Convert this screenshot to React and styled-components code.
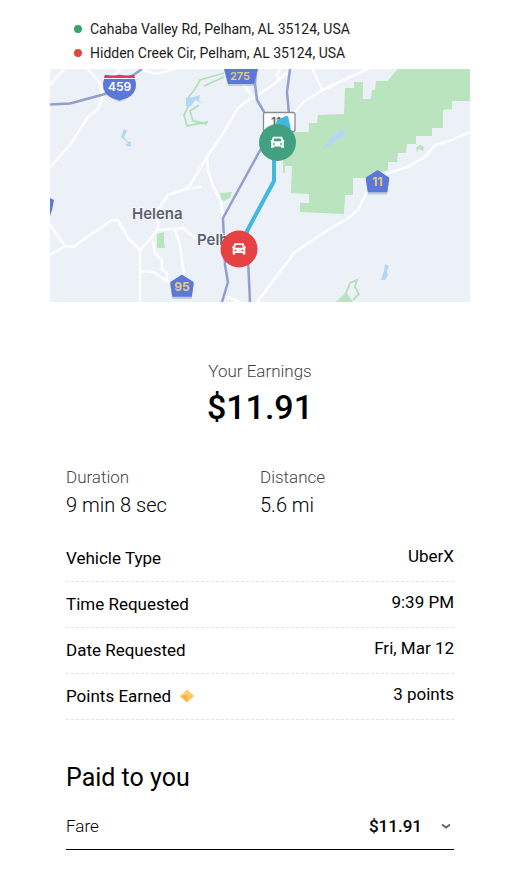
import React, { useState } from "react";
import styled, { createGlobalStyle } from "styled-components";

const GlobalStyle = createGlobalStyle`
  *, *::before, *::after { box-sizing: border-box; }
  body {
    margin: 0;
    background: #fff;
    color: #000;
    font-family: Roboto, "Liberation Sans", sans-serif;
    font-size: 17px;
    line-height: 24px;
  }
`;

const Page = styled.main`
  padding: 17px 47px 22px 50px;
`;

const Stops = styled.ul`
  list-style: none;
  margin: 0;
  padding: 0 24px 4px;
`;

const Stop = styled.li`
  display: flex;
  align-items: center;
  gap: 8px;
  font-size: 14px;
  font-weight: 400;
  color: #1c1c1c;
  &::before {
    content: "";
    width: 8px;
    height: 8px;
    border-radius: 50%;
    background: ${(p) => p.$color};
  }
`;

const Map = styled.svg`
  display: block;
  width: 100%;
  height: auto;
  background: #ecf0f7;
  font-family: Inter, "Liberation Sans", sans-serif;
`;

const Earnings = styled.section`
  padding-top: 55px;
  text-align: center;
`;

const Caption = styled.h2`
  margin: 0;
  font-size: 17px;
  font-weight: 300;
  line-height: 28px;
  color: #444;
`;

const Total = styled.p`
  margin: 0;
  font-size: 34px;
  font-weight: 500;
  line-height: 44px;
`;

const Details = styled.section`
  padding: 0 16px;
`;

const Stats = styled.dl`
  display: grid;
  grid-template-columns: 1fr 1fr;
  margin: 0;
  padding: 34px 0 16px;
`;

const StatName = styled.dt`
  font-weight: 300;
  line-height: 28px;
  color: #444;
`;

const StatValue = styled.dd`
  margin: 0;
  font-size: 20px;
  font-weight: 300;
  line-height: 29px;
`;

const Facts = styled.dl`
  margin: 0;
`;

const Fact = styled.div`
  display: flex;
  justify-content: space-between;
  height: 46px;
  border-bottom: 1px dashed #e2e2e2;
`;

const FactName = styled.dt`
  display: flex;
  align-items: center;
  gap: 8px;
  padding-bottom: 2px;
`;

const FactValue = styled.dd`
  margin: 0;
  padding-top: 8px;
`;

const Heading = styled.h2`
  margin: 0;
  padding: 40px 0 18px;
  font-size: 25px;
  font-weight: 400;
  line-height: 36px;
`;

const FareButton = styled.button`
  display: flex;
  align-items: center;
  width: 100%;
  padding: 0 0 11px;
  border: 0;
  border-bottom: 1px solid #000;
  background: none;
  color: #000;
  font: inherit;
  text-align: left;
  cursor: pointer;
`;

const FareName = styled.span`
  flex: 1;
  font-weight: 300;
`;

const FareAmount = styled.span`
  padding-right: 16px;
  font-weight: 500;
`;

const Icon = styled.svg`
  display: block;
  flex: none;
`;

const facts = [
  ["Vehicle Type", "UberX"],
  ["Time Requested", "9:39 PM"],
  ["Date Requested", "Fri, Mar 12"],
  ["Points Earned", "3 points"],
];

function Diamond() {
  return (
    <Icon width="16" height="16" viewBox="0 0 16 16" aria-hidden="true">
      <path d="M8 1.5 15 8H1Z" fill="#fbd283" />
      <path d="M8 1.5 15 8 8 9.5Z" fill="#fccb72" />
      <path d="M1 8 8 6.5V14.5Z" fill="#f2b33f" />
      <path d="M8 6.5 15 8 8 14.5Z" fill="#fbc45d" />
    </Icon>
  );
}

function Car({ x, y, color }) {
  return (
    <g transform={`translate(${x} ${y})`}>
      <circle r="18.5" fill={color} />
      <path
        fill="#fff"
        fillRule="evenodd"
        d="M-4.1-5.7H4.1Q4.7-5.7 4.9-5L5.6-2.4H6.8V-.9H6.3V5.6H3.8V4H-3.8V5.6H-6.3V-.9H-6.8V-2.4H-5.6L-4.9-5Q-4.7-5.7-4.1-5.7ZM-3.2-4-3.9-1.2H3.9L3.2-4ZM-4.6.8V2.2H-2.6V.8ZM2.6.8V2.2H4.6V.8Z"
      />
    </g>
  );
}

function Pentagon({ x, y, label }) {
  return (
    <g transform={`translate(${x} ${y})`}>
      <path d="M0-9.5 11-2.5Q12-2 11.7-.8L9.5 13H-9.5L-11.7-.8Q-12-2-11-2.5Z" fill="#9ba6c5" opacity=".5" />
      <path d="M0-11.5 11.3-4.3Q12-3.5 11.7-2.5L9.8 10.8H-9.8L-11.7-2.5Q-12-3.5-11.3-4.3Z" fill="#5b78d8" />
      <text y="4.5" textAnchor="middle" fontSize="12" fontWeight="700" fill="#e2cb7c">{label}</text>
    </g>
  );
}

function RouteMap() {
  return (
    <Map viewBox="0 0 420 233" role="img" aria-label="Trip route through Pelham and Helena">
      <g fill="#b9e4be">
        <path d="M420 0V32H402V40L393 41V59H382V67H366V75H357L356 84H348L347 93H338V101L316 109H303V126H295L294 145 250 143V134H259V125L241 124 242 97H235V104L233 103V91L228 63H259V54H267L268 46 294 45 295 19H304V13H313V30H321L322 21H325L326 12H338L345 3 348 0Z" />
        <path d="M107 165 114 163V172L115 179H107ZM170 123 173 124 182 123 180 129 174 132 171 130ZM366 79 370 76 374 78 373 82 369 80 367 83ZM286 233 296 223 303 233Z" />
      </g>
      <g fill="none" stroke="#b3e0ba" strokeWidth="1.8">
        <path d="M174 4 160 8 150 11 145 20 138 29 139 36 134 46 137 57 158 53M174 8 154 17M149 36 140 42 143 52 157 55M296 224 300 214 307 211 305 218 309 225 303 231" />
      </g>
      <g fill="#b3d7f7">
        <path d="M271 81 281 69 292 60 297 68 290 68 281 76ZM136 29 144 28 150 26 149 31 153 34 145 31 141 37 136 37ZM335 195 339 197 337 202 338 206 335 211 331 211 334 202ZM74 60 77 62 74 68 78 73 81 72 81 78 75 76 78 74 71 68Z" />
      </g>
      <g fill="none" stroke="#fcfdff" strokeWidth="2.6" strokeLinejoin="round" strokeLinecap="round">
        <path d="M38 0 50 14 53 27 48 40 38 48 20 76 0 98M14 0 0 16M70 0 57 15M90 0 106 5 125 0M190 11 203 28 188 39 177 58 157 88 140 116 133 121M157 88 158 101 163 117 171 133 173 148" />
        <path d="M206 27 223 16 240 1M230 0 227 6 230 11M243 46 253 33 273 21 300 8 318 0M263 1 272 20" />
        <path d="M420 63 402 71 385 76 375 88 357 98 339 104 320 116 308 141 300 148 275 163 245 183 207 233" />
        <path d="M150 118 133 121 118 126 108 141V161L90 181V233M90 181 78 169 68 151 62 151 40 166 23 178 15 177 0 186M15 177 0 156M108 161 133 159 145 169M125 161 130 176 134 206M103 173 105 184 112 191V201L117 204V211M90 202 103 203 120 214M178 228 190 233" />
      </g>
      <g fill="none" stroke="#929ecf" strokeWidth="2.5" strokeLinejoin="round">
        <path d="M0 35.5 20 34.5 55 25 82 7 92 0M206 0 205 15 207 31 217 48M240 0 237 23 239 45M219 65 173 149 175 196 178 213 172 233M198 190 200 233" />
      </g>
      <path d="M53 12H86V19Q82 29 69.5 33 57 29 53 19Z" fill="#b8c0d8" opacity=".7" />
      <path d="M55 6Q62 8 69.5 6 77 8 84 6L86 15Q86 25 77 29L69.5 31.5 62 29Q53 25 53 15Z" fill="#5b78d8" />
      <path d="M55 5.8Q62 7 69.5 5.8 77 7 84 5.8L85 9H54Z" fill="#dc3979" />
      <path d="M53 9.5H86" stroke="#fff" strokeWidth="1.2" />
      <text x="69.5" y="22" textAnchor="middle" fontSize="12" fontWeight="600" fill="#fff">459</text>
      <path d="M174 0H208L204 17H178Z" fill="#9ba6c5" opacity=".5" />
      <path d="M174 0H208L204 15H178Z" fill="#5b78d8" />
      <text x="190" y="11" textAnchor="middle" fontSize="11" fontWeight="600" fill="#e2cb7c">275</text>
      <path d="M0 129 4 131 2 141 0 147Z" fill="#5b78d8" />
      <Pentagon x={327.5} y={112.5} label="11" />
      <Pentagon x={132} y={217} label="95" />
      <g fill="#5a616e" fontSize="15" fontWeight="600" stroke="#f6f8fc" strokeWidth="2" paintOrder="stroke">
        <text x="82" y="150">Helena</text>
        <text x="147" y="176">Pelham</text>
      </g>
      <rect x="213.5" y="43.5" width="31.5" height="19" rx="2" fill="#fff" stroke="#888d94" strokeWidth="1.3" />
      <text x="226" y="57" textAnchor="middle" fontSize="12" fontWeight="600" fill="#65686c">11</text>
      <path d="M227 51 236 47Q238 46 238.5 49L241 60H224Z" fill="#40b8e0" />
      <path d="M224 85V112L197 162V175" fill="none" stroke="#40b8e0" strokeWidth="4" strokeLinejoin="round" />
      <Car x={227.5} y={73.5} color="#40a080" />
      <Car x={189} y={180} color="#e64143" />
    </Map>
  );
}

export default function App() {
  const [open, setOpen] = useState(false);
  return (
    <>
      <GlobalStyle />
      <Page>
        <Stops>
          <Stop $color="#34a566">Cahaba Valley Rd, Pelham, AL 35124, USA</Stop>
          <Stop $color="#dd4b3e">Hidden Creek Cir, Pelham, AL 35124, USA</Stop>
        </Stops>
        <RouteMap />
        <Earnings>
          <Caption>Your Earnings</Caption>
          <Total>$11.91</Total>
        </Earnings>
        <Details>
          <Stats>
            <div>
              <StatName>Duration</StatName>
              <StatValue>9 min 8 sec</StatValue>
            </div>
            <div>
              <StatName>Distance</StatName>
              <StatValue>5.6 mi</StatValue>
            </div>
          </Stats>
          <Facts>
            {facts.map(([name, value]) => (
              <Fact key={name}>
                <FactName>
                  {name}
                  {name === "Points Earned" && <Diamond />}
                </FactName>
                <FactValue>{value}</FactValue>
              </Fact>
            ))}
          </Facts>
          <Heading>Paid to you</Heading>
          <FareButton type="button" aria-expanded={open} onClick={() => setOpen(!open)}>
            <FareName>Fare</FareName>
            <FareAmount>$11.91</FareAmount>
            <Icon width="16" height="16" viewBox="0 0 16 16" aria-hidden="true">
              <path d="M4 6.5 8 9.5 12 6.5" fill="none" stroke="#666" strokeWidth="2" />
            </Icon>
          </FareButton>
        </Details>
      </Page>
    </>
  );
}
